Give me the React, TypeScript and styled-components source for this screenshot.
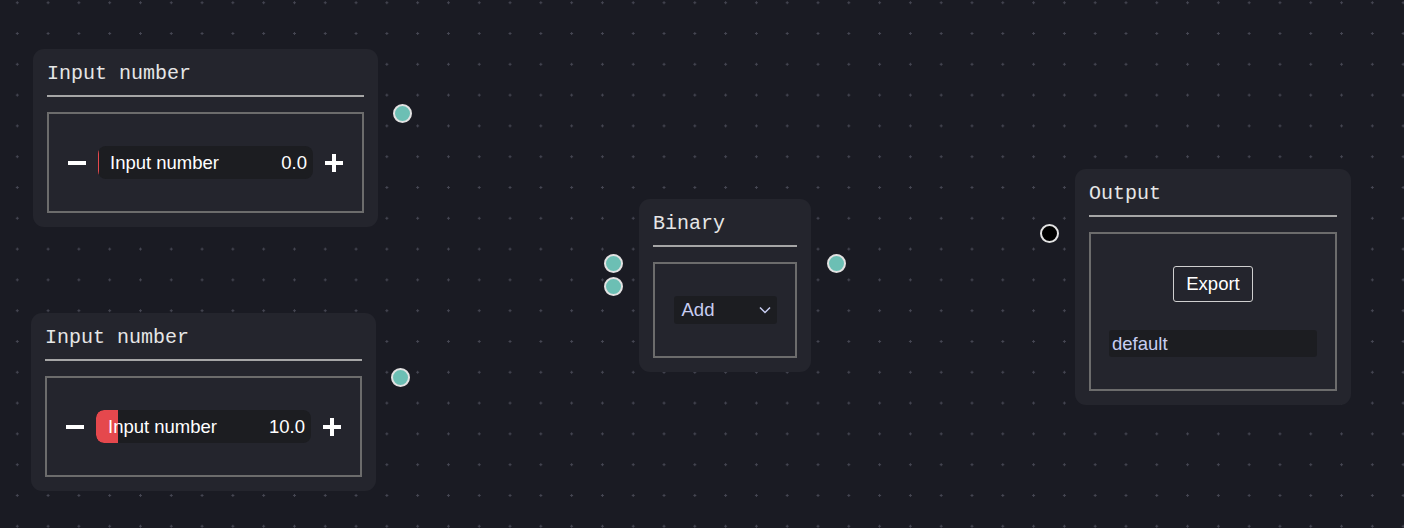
import React from "react";
import styled, { createGlobalStyle } from "styled-components";

const colors = {
  canvas: "#1a1b23",
  dot: "#454652",
  node: "#24252d",
  field: "#1c1d21",
  title: "#e6e6e6",
  divider: "#a6a6a6",
  boxLine: "#6c6c6c",
  text: "#ffffff",
  lavender: "#c8cdf2",
  teal: "#6cbfb4",
  red: "#e5484d",
};

const GlobalStyle = createGlobalStyle`
  html, body {
    margin: 0;
    padding: 0;
    background: ${colors.canvas};
  }
  * {
    box-sizing: border-box;
  }
`;

// Free canvas with dotted grid
const Canvas = styled.div`
  position: relative;
  width: 100vw;
  height: 100vh;
  overflow: hidden;
  background-color: ${colors.canvas};
  background-image: radial-gradient(circle, ${colors.dot} 1px, transparent 1.3px);
  background-size: 30.8px 30.8px;
  background-position: 1.9px -12.7px;
  font-family: "Liberation Sans", Arial, sans-serif;
`;

const Node = styled.div<{ $x: number; $y: number; $w: number }>`
  position: absolute;
  left: ${(p) => p.$x}px;
  top: ${(p) => p.$y}px;
  width: ${(p) => p.$w}px;
  background: ${colors.node};
  border-radius: 11px;
  padding: 13px 14px 14px;
  display: flex;
  flex-direction: column;
`;

const Title = styled.div`
  font-family: "Liberation Mono", "Courier New", monospace;
  font-size: 20px;
  line-height: 24px;
  color: ${colors.title};
  padding-bottom: 9px;
  border-bottom: 2px solid ${colors.divider};
`;

const Body = styled.div<{ $gap?: number }>`
  margin-top: 15px;
  border: 2px solid ${colors.boxLine};
  padding: 32px 0;
  display: flex;
  flex-direction: column;
  align-items: center;
  gap: ${(p) => p.$gap ?? 0}px;
`;

const Stepper = styled.div`
  display: flex;
  align-items: center;
  gap: 9px;
`;

const StepButton = styled.button`
  width: 24px;
  height: 24px;
  padding: 0;
  border: none;
  background: transparent;
  display: flex;
  align-items: center;
  justify-content: center;
  cursor: pointer;
`;

const NumberField = styled.div`
  position: relative;
  width: 215px;
  height: 33px;
  border-radius: 8px;
  background: ${colors.field};
  overflow: hidden;
  display: flex;
  align-items: center;
  justify-content: space-between;
  padding: 0 6px 0 12px;
  font-size: 18.5px;
  color: ${colors.text};
`;

const Fill = styled.div`
  position: absolute;
  left: 0;
  top: 0;
  bottom: 0;
  background: ${colors.red};
  border-radius: 8px 0 0 8px;
`;

const FieldText = styled.span`
  position: relative;
`;

const Select = styled.div`
  width: 103px;
  height: 28px;
  border-radius: 3px;
  background: ${colors.field};
  display: flex;
  align-items: center;
  justify-content: space-between;
  padding: 0 6px 0 8px;
  font-size: 18.5px;
  color: ${colors.lavender};
`;

const ExportButton = styled.button`
  width: 80px;
  height: 36px;
  border: 1.5px solid #cfcfcf;
  border-radius: 3px;
  background: transparent;
  color: ${colors.text};
  font-family: "Liberation Sans", Arial, sans-serif;
  font-size: 18.5px;
  padding: 0;
`;

const TextField = styled.div`
  width: 208px;
  height: 27px;
  border-radius: 3px;
  background: ${colors.field};
  color: ${colors.lavender};
  font-size: 18.5px;
  display: flex;
  align-items: center;
  padding: 0 3px;
`;

const Handle = styled.div<{ $x: number; $y: number; $empty?: boolean }>`
  position: absolute;
  left: ${(p) => p.$x - 9.5}px;
  top: ${(p) => p.$y - 9.5}px;
  width: 19px;
  height: 19px;
  border-radius: 50%;
  border: 2px solid #e2e2e2;
  background: ${(p) => (p.$empty ? "#000" : colors.teal)};
`;

const MinusIcon = () => (
  <svg width="18" height="18" viewBox="0 0 18 18">
    <rect x="0" y="7" width="18" height="4" fill="#fff" />
  </svg>
);

const PlusIcon = () => (
  <svg width="18" height="18" viewBox="0 0 18 18">
    <rect x="0" y="7" width="18" height="4" fill="#fff" />
    <rect x="7" y="0" width="4" height="18" fill="#fff" />
  </svg>
);

const Chevron = () => (
  <svg width="12" height="8" viewBox="0 0 12 8">
    <path d="M1 1.5 L6 6.5 L11 1.5" fill="none" stroke={colors.lavender} strokeWidth="1.5" />
  </svg>
);

const NumberNode = ({ x, y, value }: { x: number; y: number; value: number }) => (
  <Node $x={x} $y={y} $w={345}>
    <Title>Input number</Title>
    <Body>
      <Stepper>
        <StepButton>
          <MinusIcon />
        </StepButton>
        <NumberField>
          <Fill style={{ width: `${Math.max(1, (value / 100) * 215)}px` }} />
          <FieldText>Input number</FieldText>
          <FieldText>{value.toFixed(1)}</FieldText>
        </NumberField>
        <StepButton>
          <PlusIcon />
        </StepButton>
      </Stepper>
    </Body>
  </Node>
);

export default function App() {
  return (
    <>
      <GlobalStyle />
      <Canvas>
        <NumberNode x={33} y={49} value={0} />
        <NumberNode x={31} y={313} value={10} />

        <Node $x={639} $y={199} $w={172}>
          <Title>Binary</Title>
          <Body>
            <Select>
              <span>Add</span>
              <Chevron />
            </Select>
          </Body>
        </Node>

        <Node $x={1075} $y={169} $w={276}>
          <Title>Output</Title>
          <Body $gap={28}>
            <ExportButton>Export</ExportButton>
            <TextField>default</TextField>
          </Body>
        </Node>

        <Handle $x={402.7} $y={113.3} />
        <Handle $x={400.7} $y={377.3} />
        <Handle $x={613.3} $y={263} />
        <Handle $x={613.3} $y={286.5} />
        <Handle $x={836} $y={263} />
        <Handle $x={1049.3} $y={233.3} $empty />
      </Canvas>
    </>
  );
}
